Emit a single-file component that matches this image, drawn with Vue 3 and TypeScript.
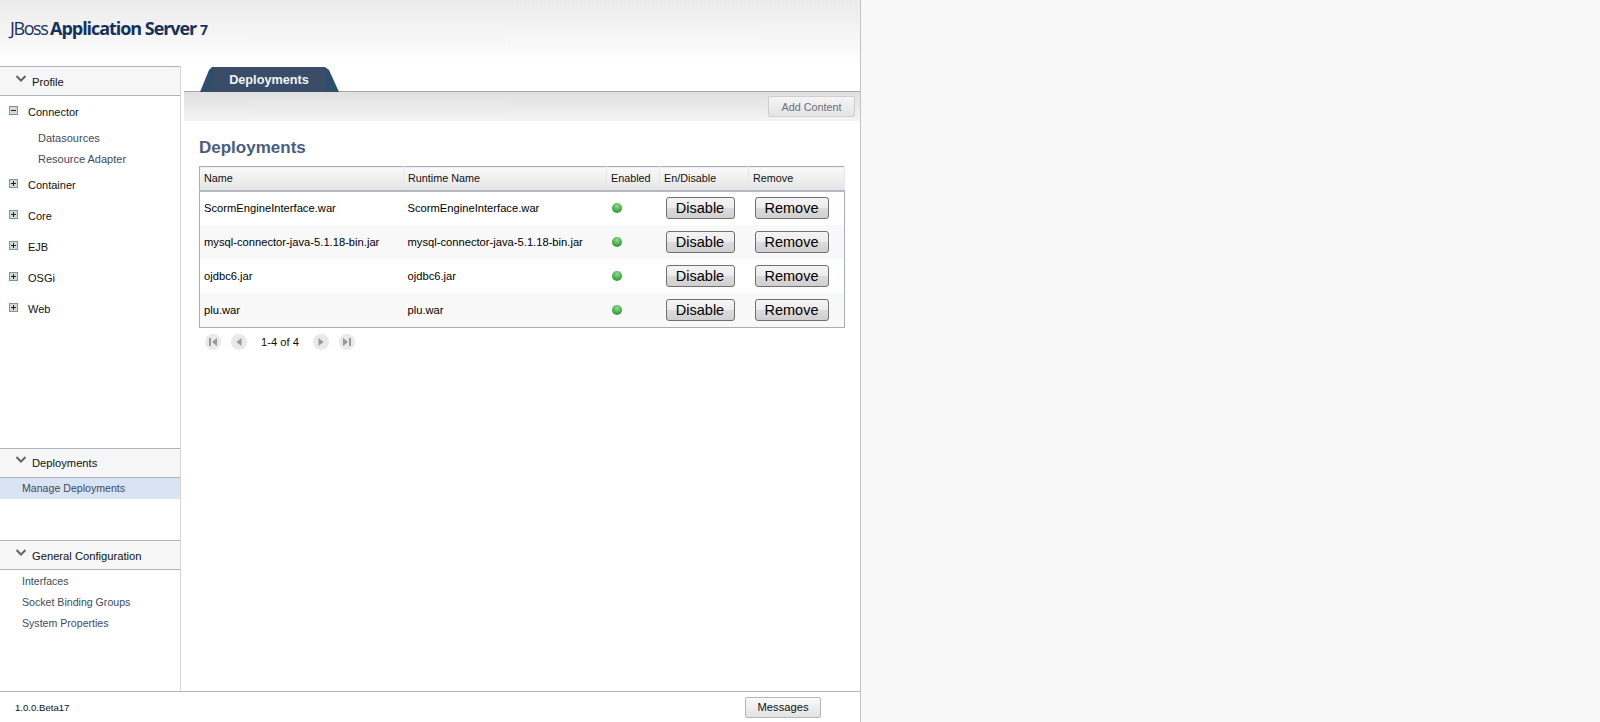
<script setup lang="ts">
interface Deployment {
  name: string
  runtimeName: string
}

const profileGroups = ['Container', 'Core', 'EJB', 'OSGi', 'Web']
const connectorItems = ['Datasources', 'Resource Adapter']
const generalItems = ['Interfaces', 'Socket Binding Groups', 'System Properties']

const deployments: Deployment[] = [
  { name: 'ScormEngineInterface.war', runtimeName: 'ScormEngineInterface.war' },
  { name: 'mysql-connector-java-5.1.18-bin.jar', runtimeName: 'mysql-connector-java-5.1.18-bin.jar' },
  { name: 'ojdbc6.jar', runtimeName: 'ojdbc6.jar' },
  { name: 'plu.war', runtimeName: 'plu.war' },
]
</script>

<template>
  <div class="console">
    <header class="top">
      <span class="logo"><span class="logo-light">JBoss</span> <b>Application Server</b> <b class="logo-seven">7</b></span>
    </header>

    <div class="middle">
      <aside class="sidebar">
        <section class="stack stack-profile">
          <h3 class="stack-head">
            <svg class="chevron" width="10" height="7" viewBox="0 0 10 7"><path d="M0.5 1 L5 5.5 L9.5 1" fill="none" stroke="#666" stroke-width="2" /></svg>
            Profile
          </h3>
          <div class="group first">
            <svg class="box" width="9" height="9" viewBox="0 0 9 9"><rect x="0.5" y="0.5" width="8" height="8" fill="#d9d9d2" stroke="#6f9ab5" /><path d="M2 4.5 H7" stroke="#222" /></svg>
            Connector
          </div>
          <a v-for="item in connectorItems" :key="item" class="sub-item">{{ item }}</a>
          <div v-for="group in profileGroups" :key="group" class="group">
            <svg class="box" width="9" height="9" viewBox="0 0 9 9"><rect x="0.5" y="0.5" width="8" height="8" fill="#d9d9d2" stroke="#6f9ab5" /><path d="M2 4.5 H7 M4.5 2 V7" stroke="#222" /></svg>
            {{ group }}
          </div>
        </section>

        <section class="stack stack-deploy">
          <h3 class="stack-head">
            <svg class="chevron" width="10" height="7" viewBox="0 0 10 7"><path d="M0.5 1 L5 5.5 L9.5 1" fill="none" stroke="#666" stroke-width="2" /></svg>
            Deployments
          </h3>
          <a class="nav-item selected">Manage Deployments</a>
        </section>

        <section class="stack stack-general">
          <h3 class="stack-head">
            <svg class="chevron" width="10" height="7" viewBox="0 0 10 7"><path d="M0.5 1 L5 5.5 L9.5 1" fill="none" stroke="#666" stroke-width="2" /></svg>
            General Configuration
          </h3>
          <a v-for="item in generalItems" :key="item" class="nav-item">{{ item }}</a>
        </section>
      </aside>

      <main class="content">
        <div class="tab-row">
          <div class="tab">Deployments</div>
        </div>
        <div class="toolbar">
          <button class="tool-btn">Add Content</button>
        </div>

        <div class="body">
          <h2 class="title">Deployments</h2>
          <table class="grid">
            <colgroup>
              <col style="width: 204px" />
              <col style="width: 203px" />
              <col style="width: 53px" />
              <col style="width: 89px" />
              <col />
            </colgroup>
            <thead>
              <tr>
                <th>Name</th>
                <th>Runtime Name</th>
                <th>Enabled</th>
                <th>En/Disable</th>
                <th>Remove</th>
              </tr>
            </thead>
            <tbody>
              <tr v-for="row in deployments" :key="row.name">
                <td>{{ row.name }}</td>
                <td>{{ row.runtimeName }}</td>
                <td><span class="dot"></span></td>
                <td><button class="row-btn disable">Disable</button></td>
                <td><button class="row-btn remove">Remove</button></td>
              </tr>
            </tbody>
          </table>

          <div class="pager">
            <span class="page-btn">
              <svg width="10" height="10" viewBox="0 0 10 10"><path d="M1 1 H3 V9 H1 Z M9 1 V9 L4 5 Z" fill="#999" /></svg>
            </span>
            <span class="page-btn">
              <svg width="10" height="10" viewBox="0 0 10 10"><path d="M7.5 1 V9 L2.5 5 Z" fill="#999" /></svg>
            </span>
            <span class="page-text">1-4 of 4</span>
            <span class="page-btn">
              <svg width="10" height="10" viewBox="0 0 10 10"><path d="M2.5 1 V9 L7.5 5 Z" fill="#999" /></svg>
            </span>
            <span class="page-btn">
              <svg width="10" height="10" viewBox="0 0 10 10"><path d="M9 1 H7 V9 H9 Z M1 1 V9 L6 5 Z" fill="#999" /></svg>
            </span>
          </div>
        </div>
      </main>
    </div>

    <footer class="bottom">
      <span class="version">1.0.0.Beta17</span>
      <button class="messages">Messages</button>
    </footer>
  </div>
</template>

<style>
html,
body {
  margin: 0;
  background: #f8f8f8;
}
</style>

<style scoped>
.console {
  width: 860px;
  height: 722px;
  display: flex;
  flex-direction: column;
  background: #fff;
  border-right: 1px solid #c4c4c4;
  font-family: 'Liberation Sans', Arial, sans-serif;
  font-size: 11.2px;
  color: #000;
  overflow: hidden;
}

.top {
  height: 66px;
  flex: none;
  box-sizing: border-box;
  padding: 15px 0 0 10px;
  background: linear-gradient(#ebebeb, #fff);
}

.logo {
  font-family: 'Open Sans', sans-serif;
  font-size: 18px;
  line-height: 26px;
  color: #17325a;
  letter-spacing: -1.05px;
  white-space: nowrap;
}

.logo-light {
  font-weight: 400;
  letter-spacing: -1.4px;
  margin-right: -1px;
}

.logo-seven {
  font-size: 14px;
}

.middle {
  flex: 1;
  display: flex;
  min-height: 0;
}

.sidebar {
  width: 181px;
  flex: none;
  box-sizing: border-box;
  border-right: 1px solid #d4d4d4;
}

.stack-profile {
  height: 382px;
}

.stack-deploy {
  height: 92px;
}

.stack-general {
  height: 151px;
}

.stack-head {
  height: 30px;
  box-sizing: border-box;
  margin: 0;
  display: flex;
  align-items: center;
  gap: 6px;
  padding: 2px 0 0 16px;
  border-top: 1px solid #b0b3bd;
  border-bottom: 1px solid #b0b3bd;
  background: #f6f6f6;
  font-size: 11.2px;
  font-weight: 400;
  color: #111;
}

.stack-deploy .stack-head {
  padding-top: 0;
}

.chevron {
  margin-top: -7px;
}

.group {
  height: 31px;
  display: flex;
  align-items: center;
  gap: 10px;
  padding-left: 9px;
  color: #111;
  font-size: 11px;
}

.group.first {
  height: 32px;
  box-sizing: border-box;
}

.box {
  margin-top: -3px;
}

.sub-item {
  display: block;
  height: 21px;
  line-height: 21px;
  padding-left: 38px;
  color: #3f4a5c;
  font-size: 11px;
}

.sub-item:last-of-type {
  margin-bottom: -1px;
}

.nav-item {
  display: block;
  height: 21px;
  line-height: 21px;
  padding-left: 22px;
  color: #3f4a5c;
  font-size: 10.6px;
}

.stack-general .nav-item:first-of-type {
  margin-top: 1px;
}

.selected {
  background: #d8e3f4;
}

.content {
  flex: 1;
  min-width: 0;
  margin-left: 3px;
  display: flex;
  flex-direction: column;
}

.tab-row {
  height: 26px;
  flex: none;
  box-sizing: border-box;
  padding: 1px 0 0 16px;
  border-bottom: 1px solid #a8a8a8;
}

.tab {
  width: 139px;
  height: 25px;
  box-sizing: border-box;
  padding: 6px 1px 0 0;
  text-align: center;
  background: linear-gradient(to right, #2d4f6b 14px, #3a4c68 14px, #3a4c68 125px, #2d4f6b 125px);
  clip-path: polygon(0 100%, 9px 3px, 12px 0, 125px 0, 129px 3px, 100% 100%);
  color: #f2f5fa;
  font-size: 12.7px;
  font-weight: 700;
}

.toolbar {
  height: 29px;
  flex: none;
  box-sizing: border-box;
  display: flex;
  justify-content: flex-end;
  padding: 4px 5px 0 0;
  background: linear-gradient(#e0e0e0, #f4f4f4);
}

.tool-btn {
  width: 87px;
  height: 21px;
  padding: 0;
  border: 1px solid #cfcfcf;
  border-radius: 2px;
  background: linear-gradient(#f5f5f5, #e4e4e4);
  font-family: inherit;
  font-size: 10.8px;
  color: #6b6f78;
}

.body {
  padding: 15px 15px 0;
}

.title {
  margin: 0 0 6px;
  height: 24px;
  line-height: 24px;
  font-size: 17px;
  font-weight: 700;
  color: #4a5d80;
}

.grid {
  width: 646px;
  border-collapse: collapse;
  table-layout: fixed;
  border: 1px solid #a9adb8;
}

.grid th {
  height: 24px;
  box-sizing: border-box;
  padding: 0 0 0 4px;
  text-align: left;
  font-size: 10.8px;
  font-weight: 400;
  background: linear-gradient(#fafafa, #e4e4e4);
  border-right: 1px solid #e8e8e8;
  border-bottom: 2px solid #b4b8c2;
  color: #111;
}

.grid td {
  height: 34px;
  box-sizing: border-box;
  padding: 0 0 0 4px;
  white-space: nowrap;
}

.grid tbody tr:last-child td {
  height: 35px;
}

.grid tbody tr:nth-child(even) {
  background: #f8f8f8;
}

.dot {
  display: block;
  width: 10px;
  height: 10px;
  margin-left: 1px;
  border-radius: 50%;
  background: radial-gradient(circle at 50% 30%, #8edc8e, #35a035 70%);
}

.row-btn {
  display: block;
  height: 22px;
  padding: 0;
  border: 1px solid #707070;
  border-radius: 3px;
  background: linear-gradient(#f4f4f4 0, #ececec 50%, #dcdcdc 50%, #cfcfcf 100%);
  font-family: inherit;
  font-size: 14.5px;
  color: #000;
}

.disable {
  width: 69px;
  margin-left: 2px;
}

.remove {
  width: 74px;
  margin-left: 2px;
}

.pager {
  display: flex;
  align-items: center;
  height: 28px;
  padding-left: 6px;
  gap: 10px;
}

.page-btn {
  width: 16px;
  height: 16px;
  border-radius: 50%;
  background: #e9e9e9;
  display: flex;
  align-items: center;
  justify-content: center;
}

.page-text {
  width: 46px;
  padding-left: 4px;
  box-sizing: border-box;
  color: #111;
  white-space: nowrap;
}

.bottom {
  height: 31px;
  flex: none;
  box-sizing: border-box;
  display: flex;
  align-items: center;
  border-top: 1px solid #b0b0b8;
  padding: 0 0 0 15px;
}

.version {
  width: 730px;
  font-size: 9.6px;
  color: #111;
}

.messages {
  width: 76px;
  height: 21px;
  padding: 0;
  border: 1px solid #b5b5b5;
  border-radius: 2px;
  background: linear-gradient(#fafafa, #e2e2e2);
  font-family: inherit;
  font-size: 11.2px;
  color: #111;
}
</style>
